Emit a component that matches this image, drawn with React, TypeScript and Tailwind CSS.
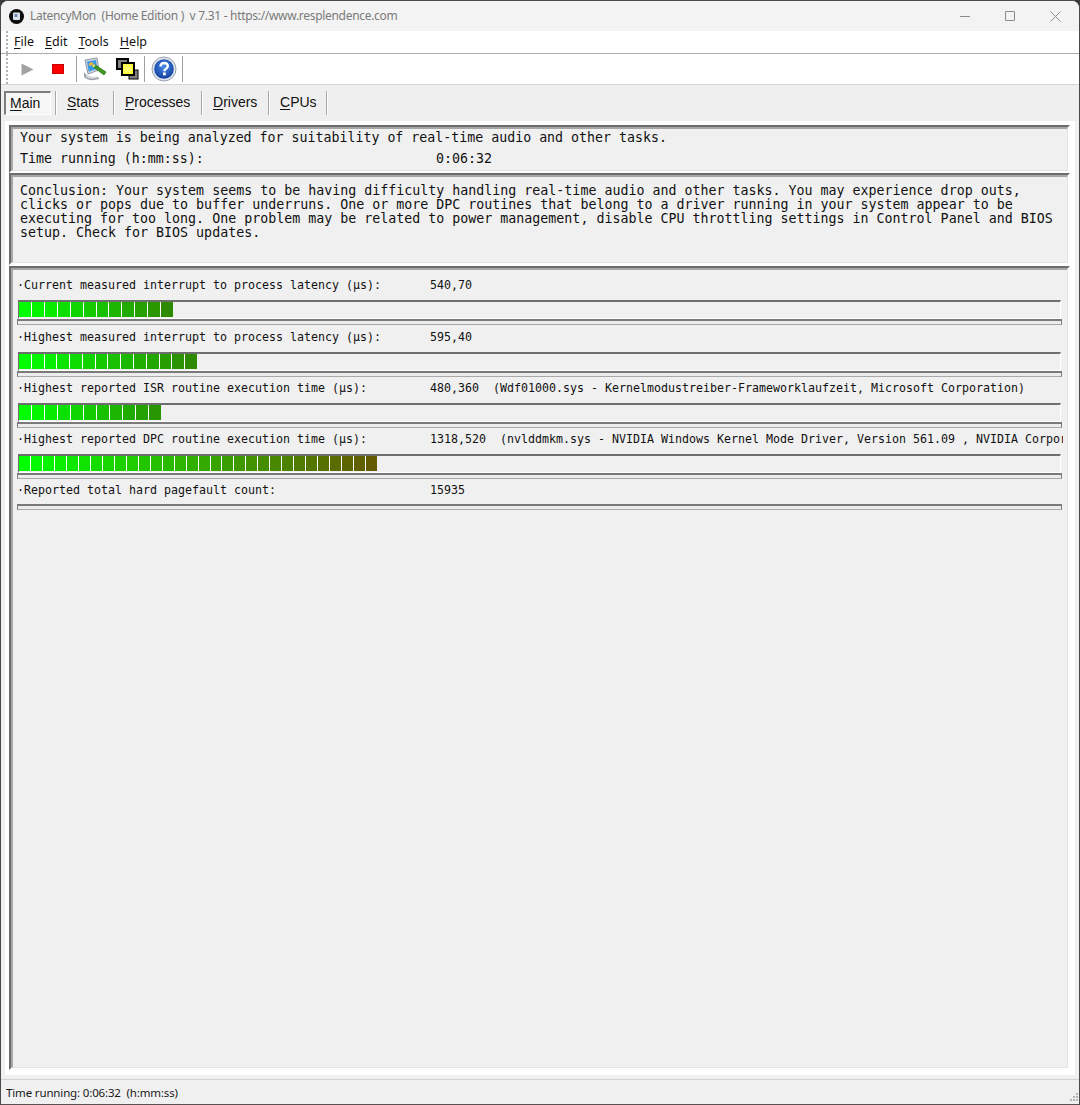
import React from "react";

const mono = "font-['DejaVu_Sans_Mono','Liberation_Mono',monospace]";
const ui = "font-['Noto_Sans','Open_Sans',sans-serif]";

function lerp(a: number, b: number, t: number) {
  return Math.round(a + (b - a) * t);
}

function Bar({ width, count, end }: { width: number; count: number; end: number[] }) {
  const cells = Array.from({ length: count }, (_, i) => i);
  return (
    <div className="mx-px h-[19px] border-t-2 border-l border-[#6e6e6e] border-r border-r-white border-b border-b-white">
      <div className="flex h-[15px] gap-px bg-white" style={{ width }}>
        {cells.map((i) => {
          const t = count > 1 ? i / (count - 1) : 0;
          return (
            <div
              key={i}
              className="flex-1"
              style={{ backgroundColor: `rgb(${lerp(0, end[0], t)},${lerp(255, end[1], t)},${lerp(0, end[2], t)})` }}
            />
          );
        })}
      </div>
    </div>
  );
}

function SmallBar() {
  return <div className="h-[6px] border border-t-2 border-[#7a7a7a] border-b-[#a8a8a8] bg-[#ececec]" />;
}

function Metric({
  label,
  value,
  className,
  children,
}: {
  label: string;
  value: string;
  className: string;
  children?: React.ReactNode;
}) {
  return (
    <div className={className}>
      <div className={`-mr-px flex h-[16px] items-center overflow-hidden whitespace-pre text-[11.63px] leading-[16px] text-[#111] ${mono}`}>
        <span className="w-[413px] shrink-0">{label}</span>
        <span>{value}</span>
      </div>
      {children}
    </div>
  );
}

function Panel({ className, children }: { className: string; children: React.ReactNode }) {
  return (
    <div className={`border-t-2 border-l-2 border-[#6c6c6c] border-r-2 border-r-[#fdfdfd] border-b-2 border-b-[#fdfdfd] ${className}`}>
      <div className="h-full border-t-2 border-l-2 border-[#a6a6a6] border-r border-r-[#e4e4e4] border-b border-b-[#e4e4e4] bg-[#f0f0f0]">
        {children}
      </div>
    </div>
  );
}

function Grip() {
  return <div className="h-full w-[2px] border-l-2 border-dotted border-[#b4b4b4]" />;
}

function Sep() {
  return <div className="h-[26px] w-[2px] border-l border-r border-l-[#a0a0a0] border-r-white" />;
}

function Key({ k, rest }: { k: string; rest: string }) {
  return (
    <span>
      <span className="underline underline-offset-2">{k}</span>
      {rest}
    </span>
  );
}

function TabSep() {
  return <div className="h-[24px] w-[2px] border-l border-r border-l-[#a8a8a8] border-r-white" />;
}

function MonitorIcon() {
  return (
    <svg width="24" height="24" viewBox="0 0 24 24">
      <path d="M1 15 Q5 22 15 20 L16 22 Q6 25 1 20 Z" fill="#9aa0a8" />
      <path d="M3 17 Q8 21 14 19 L14 21 Q7 23 3 20 Z" fill="#d5d8dc" />
      <path d="M2 3 L14 1 L16 13 L5 17 Z" fill="#d3d8e0" stroke="#7a8290" strokeWidth="0.8" />
      <path d="M4 4.500 L13 3 L14.300 11.700 L5.700 14.700 Z" fill="#3a9ae8" />
      <path d="M6 6 L10 5 L10 8 L6 9 Z" fill="#f0b040" />
      <path d="M9 9 L11 7 L23 15 L21 18 Z" fill="#3c9a1e" stroke="#1e5c10" strokeWidth="0.6" />
      <path d="M9 9 L11 7 L12.500 8 L10.500 10.500 Z" fill="#f4e6a0" />
    </svg>
  );
}

function WindowsIcon() {
  return (
    <svg width="24" height="24" viewBox="0 0 24 24">
      <rect x="1" y="2" width="11" height="10" fill="#808080" stroke="#000" strokeWidth="2" />
      <rect x="13" y="13" width="9" height="9" fill="#808080" stroke="#000" strokeWidth="1" />
      <rect x="6" y="6" width="12" height="12" fill="#ffff33" stroke="#000" strokeWidth="2" />
      <path d="M8 8h1.500v1.500h-1.500zM11 8h1.500v1.500h-1.500zM14 8h1.500v1.500h-1.500zM9.500 10h1.500v1.500h-1.500zM12.500 10h1.500v1.500h-1.500zM8 12h1.500v1.500h-1.500zM11 12h1.500v1.500h-1.500zM14 12h1.500v1.500h-1.500zM9.500 14h1.500v1.500h-1.500zM12.500 14h1.500v1.500h-1.500z" fill="#f8f8c0" />
    </svg>
  );
}

function HelpIcon() {
  return (
    <svg width="26" height="26" viewBox="0 0 26 26">
      <defs>
        <radialGradient id="helpBlue" cx="50%" cy="40%" r="60%">
          <stop offset="0%" stopColor="#4a8be8" />
          <stop offset="100%" stopColor="#12409f" />
        </radialGradient>
      </defs>
      <circle cx="13" cy="13" r="12" fill="#dfe3ea" stroke="#9aa2b0" strokeWidth="1" />
      <circle cx="13" cy="13" r="9.800" fill="url(#helpBlue)" />
      <path d="M9.500 10.500 Q9.800 7 13.200 7 Q16.800 7.200 16.800 10 Q16.800 12 14.500 13.200 Q13.400 13.800 13.400 15.200" fill="none" stroke="#fff" strokeWidth="2.400" />
      <rect x="12" y="16.500" width="2.800" height="2.800" fill="#fff" />
    </svg>
  );
}

function AppIcon() {
  return (
    <svg width="15" height="15" viewBox="0 0 15 15">
      <circle cx="7.500" cy="7.500" r="7.500" fill="#0c0c0c" />
      <rect x="4" y="3.500" width="7" height="7.500" rx="1" fill="#dde3ec" />
      <rect x="5.500" y="5" width="3" height="3" fill="#6f8fb8" />
    </svg>
  );
}

export default function App() {
  return (
    <div className="h-[1105px] w-[1080px] bg-[#3c3c3c]">
      <div className="flex h-full flex-col overflow-hidden rounded-t-[8px] border-x border-t border-[#4a4a4a] bg-[#f0f0f0]">
        {/* title bar */}
        <div className={`flex h-[30px] shrink-0 items-center bg-[#f3f3f3] pl-[8px] text-[12px] tracking-[-0.3px] text-[#7a7a7a] ${ui}`}>
          <AppIcon />
          <span className="ml-[6px] flex-1 whitespace-pre">LatencyMon  (Home Edition )  v 7.31 - https://www.resplendence.com</span>
          <div className="h-px w-[10px] bg-[#8a8a8a]" />
          <div className="ml-[35px] h-[10px] w-[10px] rounded-[1px] border border-[#8a8a8a]" />
          <svg className="ml-[35px] mr-[18px]" width="11" height="11" viewBox="0 0 11 11">
            <path d="M0.500 0.500 L10.500 10.500 M10.500 0.500 L0.500 10.500" stroke="#8a8a8a" strokeWidth="1" fill="none" />
          </svg>
        </div>

        {/* menu */}
        <div className={`flex h-[23px] shrink-0 items-center border-b border-[#ababb3] bg-white pl-[5px] text-[12.5px] text-[#111] ${ui}`}>
          <Grip />
          <div className="ml-[6px] flex gap-[11px]">
            <Key k="F" rest="ile" />
            <Key k="E" rest="dit" />
            <Key k="T" rest="ools" />
            <Key k="H" rest="elp" />
          </div>
        </div>

        {/* toolbar */}
        <div className="flex h-[31px] shrink-0 items-center border-b border-[#d6d6d6] bg-white pl-[5px]">
          <Grip />
          <svg className="ml-[13px]" width="13" height="13" viewBox="0 0 13 13">
            <path d="M0.500 0.500 L12.500 6.500 L0.500 12.500 Z" fill="#a2a2a2" />
          </svg>
          <div className="ml-[18px] h-[10px] w-[12px] border border-[#c80000] bg-[#ff0000]" />
          <div className="ml-[12px]"><Sep /></div>
          <div className="ml-[5px]"><MonitorIcon /></div>
          <div className="ml-[9px]"><WindowsIcon /></div>
          <div className="ml-[4px]"><Sep /></div>
          <div className="ml-[5px]"><HelpIcon /></div>
          <div className="ml-[5px]"><Sep /></div>
        </div>

        {/* tabs */}
        <div className="flex h-[36px] shrink-0 items-center bg-[#efefef] pl-[3px] font-['Liberation_Sans',Arial,sans-serif] text-[14px] text-[#111]">
          <div className="flex h-[24px] w-[47px] items-center border border-t-2 border-l-2 border-[#7d7d7d] border-r-white border-b-white bg-[#f6f6f6] pl-[4px]">
            <Key k="M" rest="ain" />
          </div>
          <div className="ml-[4px]"><TabSep /></div>
          <div className="w-[56px] pb-[2px] pl-[10px]"><Key k="S" rest="tats" /></div>
          <TabSep />
          <div className="w-[86px] pb-[2px] pl-[10px]"><Key k="P" rest="rocesses" /></div>
          <TabSep />
          <div className="w-[65px] pb-[2px] pl-[10px]"><Key k="D" rest="rivers" /></div>
          <TabSep />
          <div className="w-[56px] pb-[2px] pl-[10px]"><Key k="C" rest="PUs" /></div>
          <TabSep />
        </div>

        {/* main frame */}
        <div className="mx-[4px] flex min-h-0 flex-1 flex-col bg-white pt-[4px] pb-[5px] pl-[4px] pr-[5px]">
          <Panel className="h-[48px] shrink-0">
            <div className={`whitespace-pre px-[7px] pt-px text-[13.28px] text-[#111] ${mono}`}>
              <div className="h-[16px] leading-[16px]">Your system is being analyzed for suitability of real-time audio and other tasks.</div>
              <div className="mt-[5px] flex h-[16px] leading-[16px]">
                <span className="w-[416px]">Time running (h:mm:ss):</span>
                <span>0:06:32</span>
              </div>
            </div>
          </Panel>
          <Panel className="h-[92px] shrink-0">
            <div className={`whitespace-nowrap px-[7px] pt-[7px] text-[13.31px] leading-[14px] text-[#111] ${mono}`}>
              Conclusion: Your system seems to be having difficulty handling real-time audio and other tasks. You may experience drop outs,
              <br />
              clicks or pops due to buffer underruns. One or more DPC routines that belong to a driver running in your system appear to be
              <br />
              executing for too long. One problem may be related to power management, disable CPU throttling settings in Control Panel and BIOS
              <br />
              setup. Check for BIOS updates.
            </div>
          </Panel>
          <Panel className="mt-[1px] min-h-0 flex-1">
            <div className="pl-[4px] pr-[5px] pt-[7px]">
              <Metric className="h-[52px]" label="·Current measured interrupt to process latency (µs):" value="540,70">
                <div className="mt-[7px]"><Bar width={154} count={12} end={[46, 139, 0]} /></div>
                <SmallBar />
              </Metric>
              <Metric className="h-[51px]" label="·Highest measured interrupt to process latency (µs):" value="595,40">
                <div className="mt-[7px]"><Bar width={178} count={14} end={[46, 139, 0]} /></div>
                <SmallBar />
              </Metric>
              <Metric className="h-[51px]" label="·Highest reported ISR routine execution time (µs):" value="480,360  (Wdf01000.sys - Kernelmodustreiber-Frameworklaufzeit, Microsoft Corporation)">
                <div className="mt-[7px]"><Bar width={142} count={11} end={[40, 150, 0]} /></div>
                <SmallBar />
              </Metric>
              <Metric className="h-[51px]" label="·Highest reported DPC routine execution time (µs):" value="1318,520  (nvlddmkm.sys - NVIDIA Windows Kernel Mode Driver, Version 561.09 , NVIDIA Corporation)">
                <div className="mt-[7px]"><Bar width={358} count={30} end={[100, 90, 0]} /></div>
                <SmallBar />
              </Metric>
              <Metric className="h-[28px]" label="·Reported total hard pagefault count:" value="15935">
                <div className="mt-[6px]"><SmallBar /></div>
              </Metric>
            </div>
          </Panel>
        </div>

        {/* status bar */}
        <div className={`relative mt-[4px] flex h-[26px] shrink-0 items-center whitespace-pre border-t border-b border-t-[#d2d2d2] border-b-[#5a5050] pl-[5px] pt-[2px] text-[11.5px] tracking-[-0.15px] text-[#1a1a1a] ${ui}`}>
          Time running: 0:06:32  (h:mm:ss)
          <svg className="absolute bottom-0 right-0" width="12" height="12" viewBox="0 0 12 12">
            <path d="M9 1h2v2H9zM6 4h2v2H6zM9 4h2v2H9zM3 7h2v2H3zM6 7h2v2H6zM9 7h2v2H9z" fill="#b4b4b4" />
          </svg>
        </div>
      </div>
    </div>
  );
}
